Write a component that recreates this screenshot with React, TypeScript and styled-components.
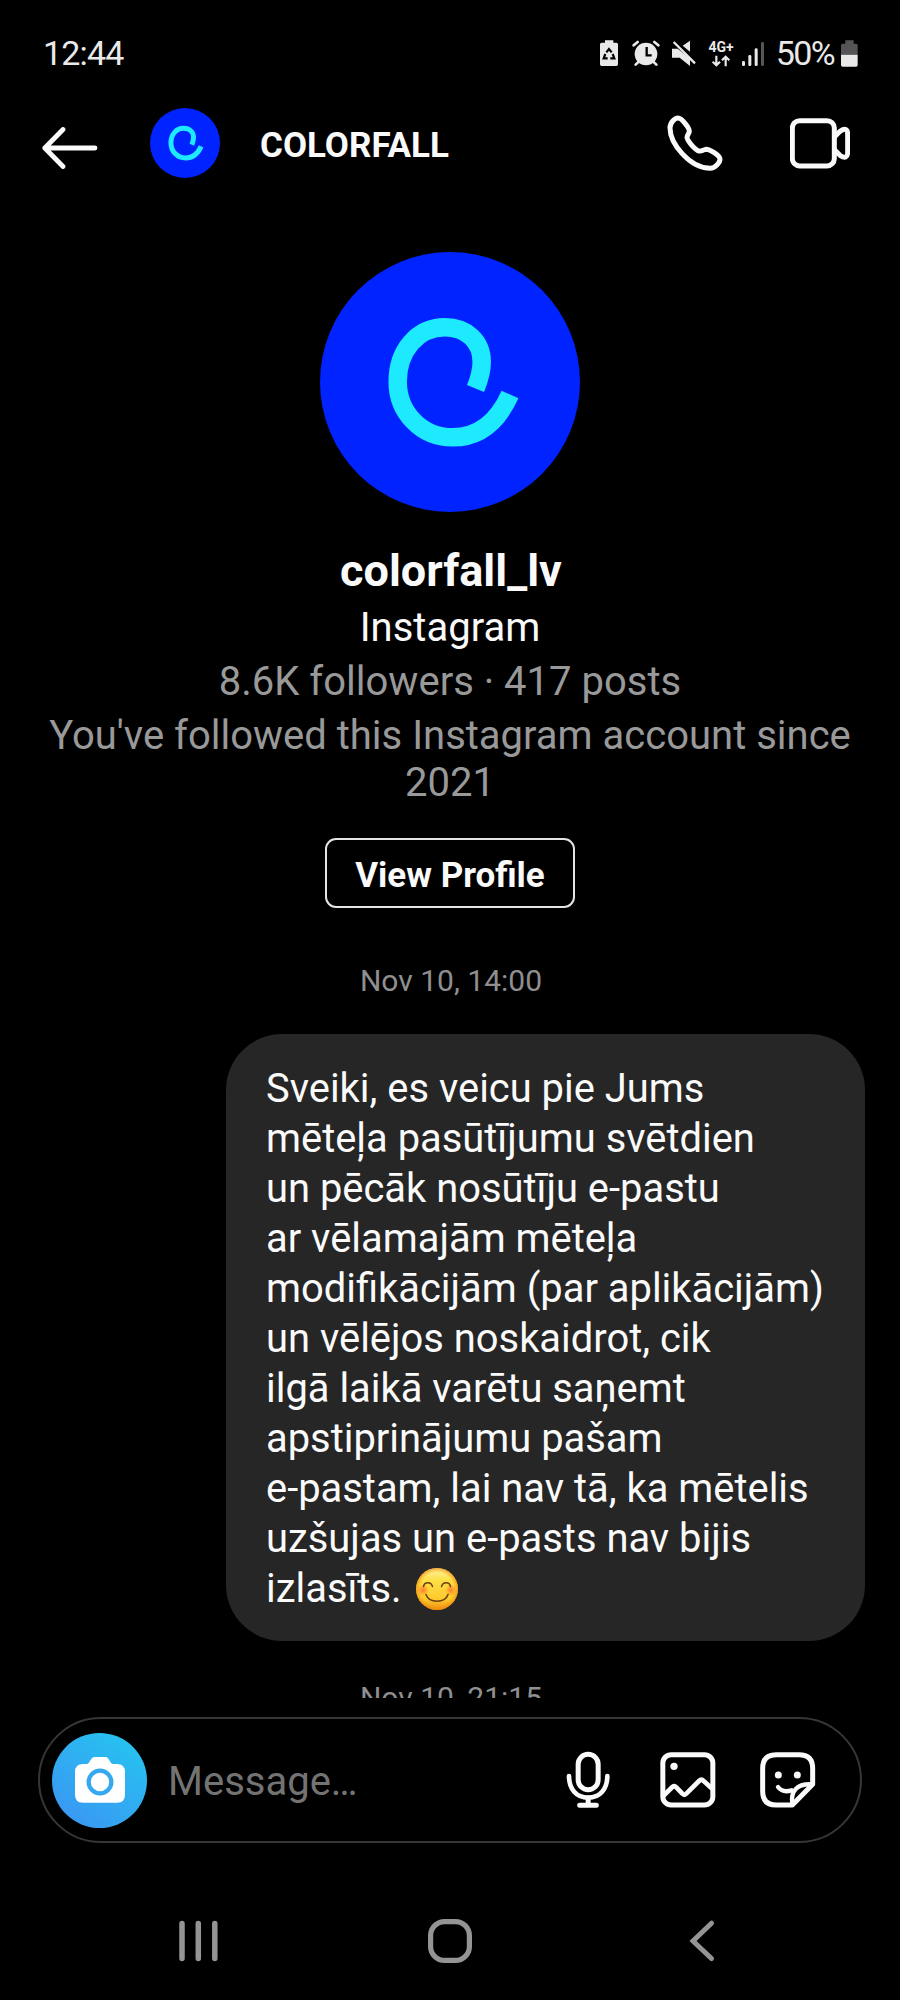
import React from "react";
import styled, { createGlobalStyle } from "styled-components";

const GlobalStyle = createGlobalStyle`
  *, *::before, *::after { box-sizing: border-box; }
  body { margin: 0; background: #000; }
  button { font: inherit; color: inherit; background: none; border: 0; padding: 0; }
  svg { display: block; }
`;

const Screen = styled.div`
  width: 900px;
  height: 2000px;
  display: flex;
  flex-direction: column;
  overflow: hidden;
  background: #000;
  color: #fafafa;
  font-family: Roboto, "Noto Sans", sans-serif;
`;

/* Status bar */

const StatusBar = styled.div`
  height: 104px;
  flex: none;
  display: flex;
  align-items: center;
  justify-content: space-between;
  padding: 2px 41px 0 43px;
  color: #e9e9e9;
`;

const Clock = styled.span`
  font-size: 34px;
  line-height: 40px;
  letter-spacing: -0.8px;
`;

const StatusIcons = styled.div`
  display: flex;
  align-items: center;
`;

const StatusGlyph = styled.svg<{ $w: number; $gap?: number }>`
  width: ${(p) => p.$w}px;
  height: 27px;
  margin-left: ${(p) => p.$gap ?? 0}px;
  fill: #e9e9e9;
`;

const Network = styled.div`
  width: 26px;
  height: 27px;
  margin-left: 11px;
  display: flex;
  flex-direction: column;
  align-items: center;
  justify-content: space-between;
`;

const NetworkLabel = styled.span`
  font-size: 14px;
  line-height: 14px;
  font-weight: 700;
  letter-spacing: -0.1px;
`;

const Percent = styled.span`
  width: 75px;
  padding-right: 6px;
  text-align: right;
  font-size: 34px;
  line-height: 40px;
  letter-spacing: -1.6px;
`;

/* Header */

const Header = styled.header`
  height: 78px;
  flex: none;
  display: flex;
  align-items: center;
  padding: 0 50px 0 42px;
`;

const BackButton = styled.button`
  margin: 10px 52px 0 0;
`;

const Title = styled.h1`
  flex: 1;
  margin: 6px 0 0 40px;
  font-size: 35px;
  line-height: 42px;
  font-weight: 700;
`;

const CallActions = styled.div`
  display: flex;
  align-items: center;
  gap: 66px;
`;

/* Thread */

const Thread = styled.main`
  height: 1516px;
  flex: none;
  overflow: hidden;
  display: flex;
  flex-direction: column;
  align-items: center;
  padding-top: 70px;
`;

const ProfileName = styled.h2`
  margin: 32px 0 0;
  padding-left: 2px;
  font-size: 45px;
  line-height: 54px;
  font-weight: 700;
`;

const ProfileLine = styled.p<{ $muted?: boolean; $gap: number }>`
  width: 830px;
  margin: ${(p) => p.$gap}px 0 0;
  text-align: center;
  font-size: 40px;
  line-height: 47px;
  color: ${(p) => (p.$muted ? "#999" : "#fafafa")};
`;

const ProfileButton = styled.button`
  flex: none;
  width: 250px;
  height: 70px;
  margin-top: 32px;
  padding-top: 4px;
  border: 2px solid #e4e4e4;
  border-radius: 11px;
  font-size: 35px;
  font-weight: 700;
`;

const Timestamp = styled.time<{ $gap: number }>`
  flex: none;
  margin-top: ${(p) => p.$gap}px;
  padding-left: 2px;
  font-size: 30px;
  line-height: 36px;
  color: #8f8f8f;
`;

const Bubble = styled.div`
  flex: none;
  align-self: flex-end;
  width: 639px;
  margin: 35px 35px 0 0;
  padding: 30px 30px 27px 40px;
  border-radius: 56px;
  background: #262626;
  font-size: 39.9px;
  line-height: 50px;
  white-space: nowrap;
`;

const BubbleLine = styled.div`
  display: flex;
  align-items: center;
  height: 50px;
`;

const Emoji = styled.svg`
  width: 42px;
  height: 42px;
  margin-left: 14px;
`;

/* Composer */

const Composer = styled.div`
  flex: none;
  width: 824px;
  height: 126px;
  margin: 19px 0 0 38px;
  padding: 0 44px 0 12px;
  display: flex;
  align-items: center;
  border: 2px solid #363636;
  border-radius: 63px;
`;

const CameraButton = styled.button`
  width: 95px;
  height: 95px;
  display: grid;
  place-items: center;
  border-radius: 50%;
  background: linear-gradient(35deg, #3c94f3 5%, #27c0f0 85%);
`;

const Placeholder = styled.span`
  flex: 1;
  margin: 4px 0 0 21px;
  font-size: 40px;
  line-height: 48px;
  color: #737373;
`;

const ComposerTools = styled.div`
  display: flex;
  align-items: center;
`;

const Tool = styled.svg<{ $w: number; $gap?: number }>`
  width: ${(p) => p.$w}px;
  height: 58px;
  margin-left: ${(p) => p.$gap ?? 0}px;
`;

/* System navigation */

const NavBar = styled.nav`
  flex: 1;
  display: grid;
  grid-template-columns: 1fr 44px 1fr;
  align-items: center;
  padding: 38px 183px 0 176px;
`;

const NavIcon = styled.svg<{ $w: number; $shift?: number; $end?: boolean }>`
  width: ${(p) => p.$w}px;
  height: 44px;
  margin-left: ${(p) => p.$shift ?? 0}px;
  justify-self: ${(p) => (p.$end ? "end" : "start")};
  fill: none;
  stroke: #949494;
  stroke-linecap: round;
`;

const AvatarMark = styled.svg<{ $size: number }>`
  flex: none;
  width: ${(p) => p.$size}px;
  height: ${(p) => p.$size}px;
`;

const Avatar = ({ size }: { size: number }) => (
  <AvatarMark $size={size} viewBox="0 0 260 260">
    <circle cx="130" cy="130" r="130" fill="#0023ff" />
    <path
      d="M155.5 136.5C159 128 161.7 119 161.7 110C161.7 89 146 75.3 125 75.3C97 75.3 77.7 99 77.7 129.7C77.7 160 101 185.3 132.5 185.3C160 185.3 178 169 190 142.5"
      fill="none"
      stroke="#1de9ff"
      strokeWidth="18.5"
    />
  </AvatarMark>
);

const line = {
  fill: "none",
  stroke: "#fafafa",
  strokeLinecap: "round",
  strokeLinejoin: "round",
} as const;

const messageLines = [
  "Sveiki, es veicu pie Jums",
  "mēteļa pasūtījumu svētdien",
  "un pēcāk nosūtīju e-pastu",
  "ar vēlamajām mēteļa",
  "modifikācijām (par aplikācijām)",
  "un vēlējos noskaidrot, cik",
  "ilgā laikā varētu saņemt",
  "apstiprinājumu pašam",
  "e-pastam, lai nav tā, ka mētelis",
  "uzšujas un e-pasts nav bijis",
];

const SmilingFace = () => (
  <Emoji viewBox="0 0 42 42" role="img" aria-label="😊">
    <defs>
      <linearGradient id="face" x1="0" y1="0" x2="0" y2="1">
        <stop offset="0" stopColor="#fff3a0" />
        <stop offset="0.3" stopColor="#fddf45" />
        <stop offset="0.75" stopColor="#fdc92c" />
        <stop offset="1" stopColor="#ee8a12" />
      </linearGradient>
      <radialGradient id="rim">
        <stop offset="0.78" stopColor="#f59a10" stopOpacity="0" />
        <stop offset="1" stopColor="#f08c0c" stopOpacity="0.75" />
      </radialGradient>
      <radialGradient id="blush">
        <stop offset="0" stopColor="#ff6a2a" stopOpacity="0.85" />
        <stop offset="1" stopColor="#ff7a2a" stopOpacity="0" />
      </radialGradient>
    </defs>
    <circle cx="21" cy="21" r="21" fill="url(#face)" />
    <circle cx="21" cy="21" r="21" fill="url(#rim)" />
    <circle cx="7" cy="22" r="6" fill="url(#blush)" />
    <circle cx="35" cy="22" r="6" fill="url(#blush)" />
    <g fill="none" stroke="#6b3f12" strokeWidth="1.5" strokeLinecap="round">
      <path d="M7.5 18.5C8.5 13.5 15 13.5 16.5 18.5" />
      <path d="M25.5 18.5C27 13.5 33.5 13.5 34.5 18.5" />
      <path d="M10 26.5C13 35.5 29 35.5 32 26.5" />
    </g>
  </Emoji>
);

export default function App() {
  return (
    <Screen>
      <GlobalStyle />
      <StatusBar>
        <Clock>12:44</Clock>
        <StatusIcons>
          <StatusGlyph $w={20} viewBox="57 55 60 81">
            <path d="M75 56H100V63H109Q114 63 114 68V128Q114 133 109 133H65Q60 133 60 128V68Q60 63 65 63H75Z" />
            <g fill="none" stroke="#000" strokeWidth="6.5">
              <path d="M79 92L87 82L95 92" />
              <path d="M76 97L71 110H83" />
              <path d="M98 97L103 110H91" />
            </g>
          </StatusGlyph>
          <StatusGlyph $w={28} $gap={13} viewBox="156 55 84 81">
            <circle cx="198" cy="97" r="34" />
            <g stroke="#e9e9e9" strokeWidth="8" strokeLinecap="round">
              <path d="M161 71L173 61M235 71L223 61M177 119L167 129M219 119L229 129" />
            </g>
            <path d="M200 76V101H215" fill="none" stroke="#000" strokeWidth="7" />
          </StatusGlyph>
          <StatusGlyph $w={26} $gap={11} viewBox="273 55 78 81">
            <path d="M276 81H293L330 111V133L299 108H276Z" />
            <path d="M308 72L330 57V90Z" />
            <path d="M290 60L352 119" stroke="#000" strokeWidth="4" />
            <path d="M281 61L345 125" stroke="#e9e9e9" strokeWidth="7" />
          </StatusGlyph>
          <Network>
            <NetworkLabel>4G+</NetworkLabel>
            <svg width="18" height="12" viewBox="0 0 54 36" fill="none" stroke="#e9e9e9" strokeWidth="6.5">
              <path d="M13 2V31M2 20L13 31L24 20M41 34V6M30 16L41 5L52 16" />
            </svg>
          </Network>
          <StatusGlyph $w={24} $gap={7} viewBox="483 55 72 81">
            <rect x="486" y="118" width="9" height="15" rx="4" />
            <rect x="505" y="100" width="9" height="33" rx="4" />
            <rect x="524" y="80" width="9" height="53" rx="4" />
            <rect x="543" y="61" width="9" height="72" rx="4" fill="#555" />
          </StatusGlyph>
          <Percent>50%</Percent>
          <StatusGlyph $w={19} viewBox="780 55 57 81">
            <path d="M796 56H821V66H828Q833 66 833 71V99H783V71Q783 66 788 66H796Z" fill="#555" />
            <path d="M783 99H833V130Q833 135 828 135H788Q783 135 783 130Z" />
          </StatusGlyph>
        </StatusIcons>
      </StatusBar>

      <Header>
        <BackButton aria-label="Back">
          <svg width="56" height="42" viewBox="0 0 56 42" {...line} strokeWidth="4.800">
            <path d="M21 2.500L2.800 21L21 39.500M3 21H53" />
          </svg>
        </BackButton>
        <Avatar size={70} />
        <Title>COLORFALL</Title>
        <CallActions>
          <svg width="58" height="60" viewBox="257 279 174 180" {...line} strokeWidth="15">
            <path d="M293 294C283 294 269 308 269 324C269 370 328 445 390 445C404 445 419 428 419 418C419 406 387 387 376 388C368 390 362 395 356 393C345 390 320 362 320 352C320 346 327 340 327 334C327 323 304 294 293 294Z" />
          </svg>
          <svg width="60" height="52" viewBox="630 291 180 156" {...line} strokeWidth="15">
            <rect x="637" y="302" width="126" height="136" rx="22" />
            <path d="M764 350L780 334Q803 318 803 344V396Q803 421 780 406L764 390" />
          </svg>
        </CallActions>
      </Header>

      <Thread>
        <Avatar size={260} />
        <ProfileName>colorfall_lv</ProfileName>
        <ProfileLine $gap={6}>Instagram</ProfileLine>
        <ProfileLine $gap={7} $muted>8.6K followers · 417 posts</ProfileLine>
        <ProfileLine $gap={7} $muted>
          You've followed this Instagram account since 2021
        </ProfileLine>
        <ProfileButton>View Profile</ProfileButton>
        <Timestamp $gap={55}>Nov 10, 14:00</Timestamp>
        <Bubble>
          {messageLines.map((text) => (
            <BubbleLine key={text}>{text}</BubbleLine>
          ))}
          <BubbleLine>
            izlasīts.
            <SmilingFace />
          </BubbleLine>
        </Bubble>
        <Timestamp $gap={39}>Nov 10, 21:15</Timestamp>
      </Thread>

      <Composer>
        <CameraButton aria-label="Camera">
          <svg width="50" height="46" viewBox="0 0 150 138">
            <path
              d="M24 21H36C44 21 46 0 60 0H91C103 0 105 21 114 21H126Q150 21 150 45V113Q150 137 126 137H24Q0 137 0 113V45Q0 21 24 21Z"
              fill="#fff"
            />
            <circle cx="75" cy="75" r="34" fill="none" stroke="#36a9ee" strokeWidth="13" />
          </svg>
        </CameraButton>
        <Placeholder>Message…</Placeholder>
        <ComposerTools>
          <Tool $w={44} viewBox="76 153 132 174" {...line} strokeWidth="15">
            <rect x="112.500" y="163" width="60" height="106" rx="30" />
            <path d="M85 228C85 267 107 293 142.500 293C178 293 200 267 200 228" strokeWidth="14" />
            <path d="M142.500 294V315M117 316H167" />
          </Tool>
          <Tool $w={56} $gap={50} viewBox="359 153 168 174" {...line} strokeWidth="15">
            <rect x="367.500" y="164" width="150" height="151" rx="25" />
            <path d="M370 287L396 261Q402 256 408 262L426 281Q432 287 438 281L476 243Q483 236 490 243L514 265" strokeWidth="14" />
            <circle cx="401" cy="199" r="11" fill="#fafafa" stroke="none" />
          </Tool>
          <Tool $w={56} $gap={44} viewBox="659 153 168 174" {...line} strokeWidth="15">
            <path d="M756 315H708Q667 315 667 274V205Q667 164 708 164H776Q817 164 817 205V253Z" />
            <path d="M756 312C750 272 770 251 814 253" strokeWidth="13" />
            <path d="M713 261C722 273 738 276 754 271" strokeWidth="13" />
            <circle cx="714" cy="225" r="10.500" fill="#fafafa" stroke="none" />
            <circle cx="771" cy="225" r="10.500" fill="#fafafa" stroke="none" />
          </Tool>
        </ComposerTools>
      </Composer>

      <NavBar>
        <NavIcon $w={44} viewBox="0 0 44 44" strokeWidth="5.500">
          <path d="M6 4.500V39.500M22.300 4.500V39.500M38.800 4.500V39.500" />
        </NavIcon>
        <NavIcon $w={44} $shift={3} viewBox="0 0 44 44" strokeWidth="5.200">
          <rect x="2.600" y="2.600" width="38.800" height="38.800" rx="14" />
        </NavIcon>
        <NavIcon $w={30} $end viewBox="0 0 30 44" strokeWidth="5">
          <path d="M24.500 4.200L6 22L24.500 39.500" />
        </NavIcon>
      </NavBar>
    </Screen>
  );
}
